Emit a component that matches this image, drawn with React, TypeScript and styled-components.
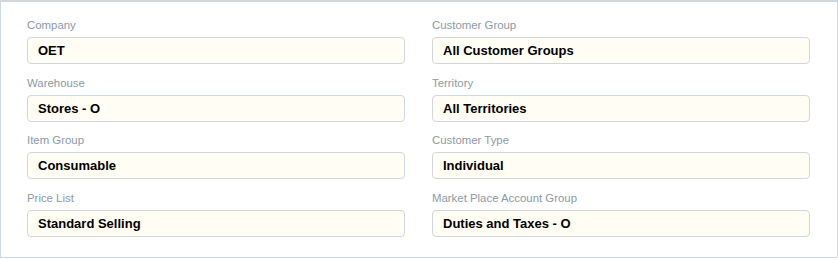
import React from "react";
import styled, { createGlobalStyle } from "styled-components";

const GlobalStyle = createGlobalStyle`
  body {
    margin: 0;
    background: #ffffff;
    font-family: "Liberation Sans", Arial, sans-serif;
  }
`;

const Section = styled.div`
  width: 838px;
  box-sizing: border-box;
  border: 1px solid #d1d8dd;
  border-top-width: 2px;
  padding: 12px 27px 20px 26px;
  display: grid;
  grid-template-columns: 1fr 1fr;
  column-gap: 27px;
  row-gap: 7.67px;
  grid-auto-flow: column;
  grid-template-rows: repeat(4, auto);
  background: #ffffff;
`;

const Field = styled.div`
  display: flex;
  flex-direction: column;
`;

const Label = styled.label`
  font-size: 11.4px;
  line-height: 23px;
  color: #8d99a6;
`;

const Control = styled.div`
  height: 27px;
  box-sizing: border-box;
  border: 1px solid #d1d8dd;
  border-radius: 4px;
  background: #fffdf4;
  padding: 0 10px;
  font-size: 13px;
  font-weight: 700;
  line-height: 25px;
  color: #000000;
  white-space: nowrap;
  overflow: hidden;
`;

const fields = [
  { label: "Company", value: "OET" },
  { label: "Warehouse", value: "Stores - O" },
  { label: "Item Group", value: "Consumable" },
  { label: "Price List", value: "Standard Selling" },
  { label: "Customer Group", value: "All Customer Groups" },
  { label: "Territory", value: "All Territories" },
  { label: "Customer Type", value: "Individual" },
  { label: "Market Place Account Group", value: "Duties and Taxes - O" },
];

const App = () => {
  return (
    <>
      <GlobalStyle />
      <Section>
        {fields.map((f) => (
          <Field key={f.label}>
            <Label>{f.label}</Label>
            <Control>{f.value}</Control>
          </Field>
        ))}
      </Section>
    </>
  );
};

export default App;
